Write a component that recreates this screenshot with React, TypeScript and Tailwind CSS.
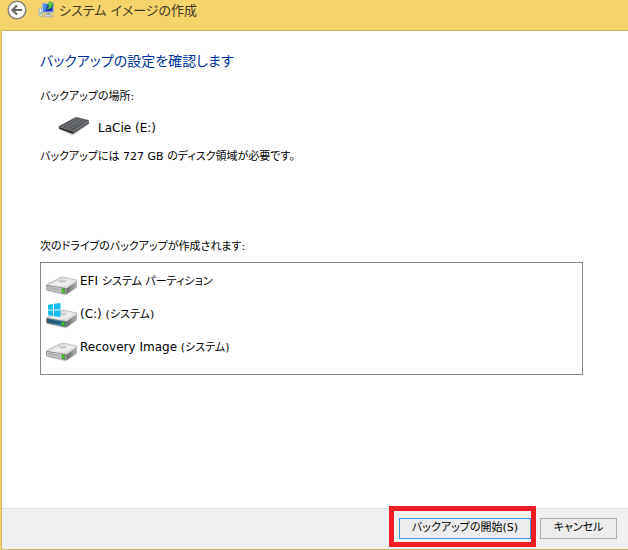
import type { ReactNode } from "react";

type DriveKind = "plain" | "windows";

const drives: { latin: string; name: string; kind: DriveKind }[] = [
  { latin: "EFI ", name: "システム パーティション", kind: "plain" },
  { latin: "(C:) ", name: "(システム)", kind: "windows" },
  { latin: "Recovery Image ", name: "(システム)", kind: "plain" },
];

function BackIcon() {
  return (
    <svg width="20" height="20" viewBox="0 0 20 20" fill="none" aria-hidden="true">
      <circle cx="10" cy="10" r="8.800" fill="#fdfcf8" stroke="#85837c" strokeWidth="1.500" />
      <path d="M15 10H6M10 5.500 5.500 10l4.500 4.500" stroke="#6a6a68" strokeWidth="2.200" />
    </svg>
  );
}

function SystemImageIcon() {
  return (
    <svg width="17" height="17" viewBox="0 0 17 17" aria-hidden="true">
      <path d="M1 7.500 4 7v8.500l-3-.8z" fill="#eef1f4" stroke="#8795a3" strokeWidth=".7" />
      <path d="M1.800 11.500h1.400v1.500H1.800z" fill="#49b53a" />
      <path d="M4 2.500 15.500 1.500v10L4 11.800z" fill="#dfe6ef" stroke="#8a9bb5" strokeWidth=".7" />
      <path d="M5 3.400 14.700 2.500v8L5 10.800z" fill="#1a35b8" />
      <path d="M5 3.400 9.500 3 7.500 10.700H5z" fill="#4a86e6" />
      <path d="M9 12h3v2H9z" fill="#9aa6b4" />
      <path d="M6.500 13.800h7.500l1 1.900H6z" fill="#dfe4ea" stroke="#8795a8" strokeWidth=".6" />
      <path d="M9 7.500c1.800-.6 2.200-1.800 2.100-3.300H9L12.300.3l3.500 3.900h-2c.1 2.500-1.600 3.800-4.800 3.800z" fill="#5bd23c" stroke="#2b9422" strokeWidth=".5" />
    </svg>
  );
}

function ExternalDriveIcon() {
  return (
    <svg width="32" height="22" viewBox="0 0 32 22" aria-hidden="true">
      <defs>
        <linearGradient id="lid" x1="0" y1="0" x2="1" y2="1">
          <stop offset="0" stopColor="#4a4b4e" />
          <stop offset=".5" stopColor="#606266" />
          <stop offset="1" stopColor="#2b2c2f" />
        </linearGradient>
      </defs>
      <path d="M1 14.500 15 20.500 31 9V7L15 18.500 1 13z" fill="#cfcfd1" />
      <path d="m.8 11.500 14.200 4.500v3L1 13.800z" fill="#2c2d30" />
      <path d="M15 16 31 6v2.500L15 19z" fill="#56585c" />
      <path d="M.8 11.500 17 2.800q.8-.4 1.800-.2L31 5.500 15 16z" fill="url(#lid)" stroke="#3b3c3f" strokeWidth=".5" />
      <path d="m4 11.500 15-8M8 12.700l15-8.200M12 14l15-8.500" stroke="#85888c" strokeWidth=".5" />
      <path d="m1 11.700 14 4.400 16-10.200" fill="none" stroke="#a3a5a8" strokeWidth=".5" />
    </svg>
  );
}

function DriveIcon({ kind }: { kind: DriveKind }) {
  const windows = kind === "windows";
  return (
    <svg className="overflow-visible" width="32" height="20" viewBox="0 0 32 20" aria-hidden="true">
      <defs>
        <linearGradient id={`top-${kind}`} x1="0" y1="0" x2="1" y2="1">
          <stop offset="0" stopColor="#b9babb" />
          <stop offset=".5" stopColor="#ececec" />
          <stop offset="1" stopColor="#c3c4c5" />
        </linearGradient>
        <linearGradient id={`front-${kind}`} x1="0" y1="0" x2="1" y2="0">
          <stop offset="0" stopColor={windows ? "#3c5563" : "#c4c5c6"} />
          <stop offset=".6" stopColor={windows ? "#2a86ab" : "#d8d9da"} />
          <stop offset="1" stopColor={windows ? "#5f7780" : "#8d8f91"} />
        </linearGradient>
        <linearGradient id={`side-${kind}`} x1="0" y1="0" x2="1" y2="0">
          <stop offset="0" stopColor="#66686a" />
          <stop offset="1" stopColor="#b4b5b7" />
        </linearGradient>
      </defs>
      <path d="M2 14.500 19 19.500 31 12v-2L19 18z" fill="#d9d9d9" />
      <path
        d="M.6 9.600q-.1-1 1-1.500L14.500 1.500q1.200-.5 2.600-.3L30 3.800q1.300.4 1 1.500L20.500 13z"
        fill={`url(#top-${kind})`}
        stroke="#a2a3a5"
        strokeWidth=".6"
      />
      <path d="M5 8.500 15.500 2.800l11.500 2.200-7 5z" fill="#f2f2f2" opacity=".6" />
      <path d="M12 4.800q4-1.800 9-.6-1 3-6 2.600z" fill="#b5b6b8" opacity=".6" />
      <path d="M20.500 12.800 31 5v5.200q0 .7-.8 1.200L21 18z" fill={`url(#side-${kind})`} />
      <path
        d="M.6 9.300 20 12.500q.8.200.8 1v3.800q0 .9-.9.700L1.500 14.300q-.9-.2-.9-1z"
        fill={`url(#front-${kind})`}
        stroke="#77797b"
        strokeWidth=".7"
      />
      <path d="m2.500 10.800 12 2.100v2.300l-12-2.300z" fill={windows ? "#1e5674" : "#aeb0b1"} />
      <path d="m16 12.800 2.500.5v3.600l-2.500-.6z" fill="#3fd31d" stroke="#207d12" strokeWidth=".5" />
      {windows && (
        <path
          d="m2-4.200 5-.8v5.500H2zM8-5.200 14.500-6v6.500H8zM2 1.500h5V7l-5-.8zM8 1.500h6.500V8L8 7.200z"
          fill="#15bdf3"
        />
      )}
    </svg>
  );
}

function DialogButton({ primary = false, children }: { primary?: boolean; children: ReactNode }) {
  return (
    <button
      type="button"
      className={
        primary
          ? "relative h-[21px] w-[132px] border border-[#3c99f0] bg-[#ececec] text-[11px] leading-[18px]"
          : "h-[21px] w-[77px] border border-[#acacac] bg-[#ececec] text-[11px] leading-[18px]"
      }
    >
      {children}
      {/* red frame around the button to press */}
      {primary && (
        <span className="pointer-events-none absolute -bottom-[9px] -left-[11px] -right-[6px] -top-[13px] border-[5px] border-[#ed1c24]" />
      )}
    </button>
  );
}

export default function App() {
  return (
    <div className="flex min-h-screen flex-col bg-[#f5d56b] pl-px font-['DejaVu_Sans','Noto_Sans_CJK_JP',sans-serif] text-[11px] leading-[18px] text-black [font-feature-settings:'palt']">
      <header className="flex h-[30px] items-start pl-[6px]">
        <button type="button" aria-label="戻る">
          <BackIcon />
        </button>
        <div className="flex items-start gap-1 pl-[11px] pt-px">
          <SystemImageIcon />
          <h1 className="text-[13px] leading-[20px] text-[#3d3826]">システム イメージの作成</h1>
        </div>
      </header>

      <div className="flex grow flex-col border-y border-l border-[#ceb559] bg-white">
        <main className="grow pl-[38px] pr-[45px] pt-[20px]">
          <h2 className="text-[14px] leading-[20px] text-[#003399]">バックアップの設定を確認します</h2>
          <p className="mt-[17px]">バックアップの場所:</p>
          <div className="mt-1 flex items-end gap-2 pl-[18px]">
            <ExternalDriveIcon />
            <span className="pt-[9px] text-[12px]">LaCie (E:)</span>
          </div>
          <p className="mt-[11px]">バックアップには 727 GB のディスク領域が必要です。</p>

          <p className="mt-[72px]" id="drive-label">
            次のドライブのバックアップが作成されます:
          </p>
          <ul
            aria-labelledby="drive-label"
            className="mt-[6px] h-[113px] border border-[#828790] pl-[5px] pt-[9px]"
          >
            {drives.map((d) => (
              <li key={d.latin} className="flex h-[33px] items-start gap-[2px]">
                <span className="pt-1">
                  <DriveIcon kind={d.kind} />
                </span>
                <span className="whitespace-pre">
                  <span className="text-[12px]">{d.latin}</span>
                  {d.name}
                </span>
              </li>
            ))}
          </ul>
        </main>

        <footer className="flex h-[41px] items-center justify-end gap-[9px] border-t border-[#dfdfdf] bg-[#f0f0f0] pb-[2px] pr-[11px]">
          <DialogButton primary>バックアップの開始(S)</DialogButton>
          <DialogButton>キャンセル</DialogButton>
        </footer>
      </div>
    </div>
  );
}
